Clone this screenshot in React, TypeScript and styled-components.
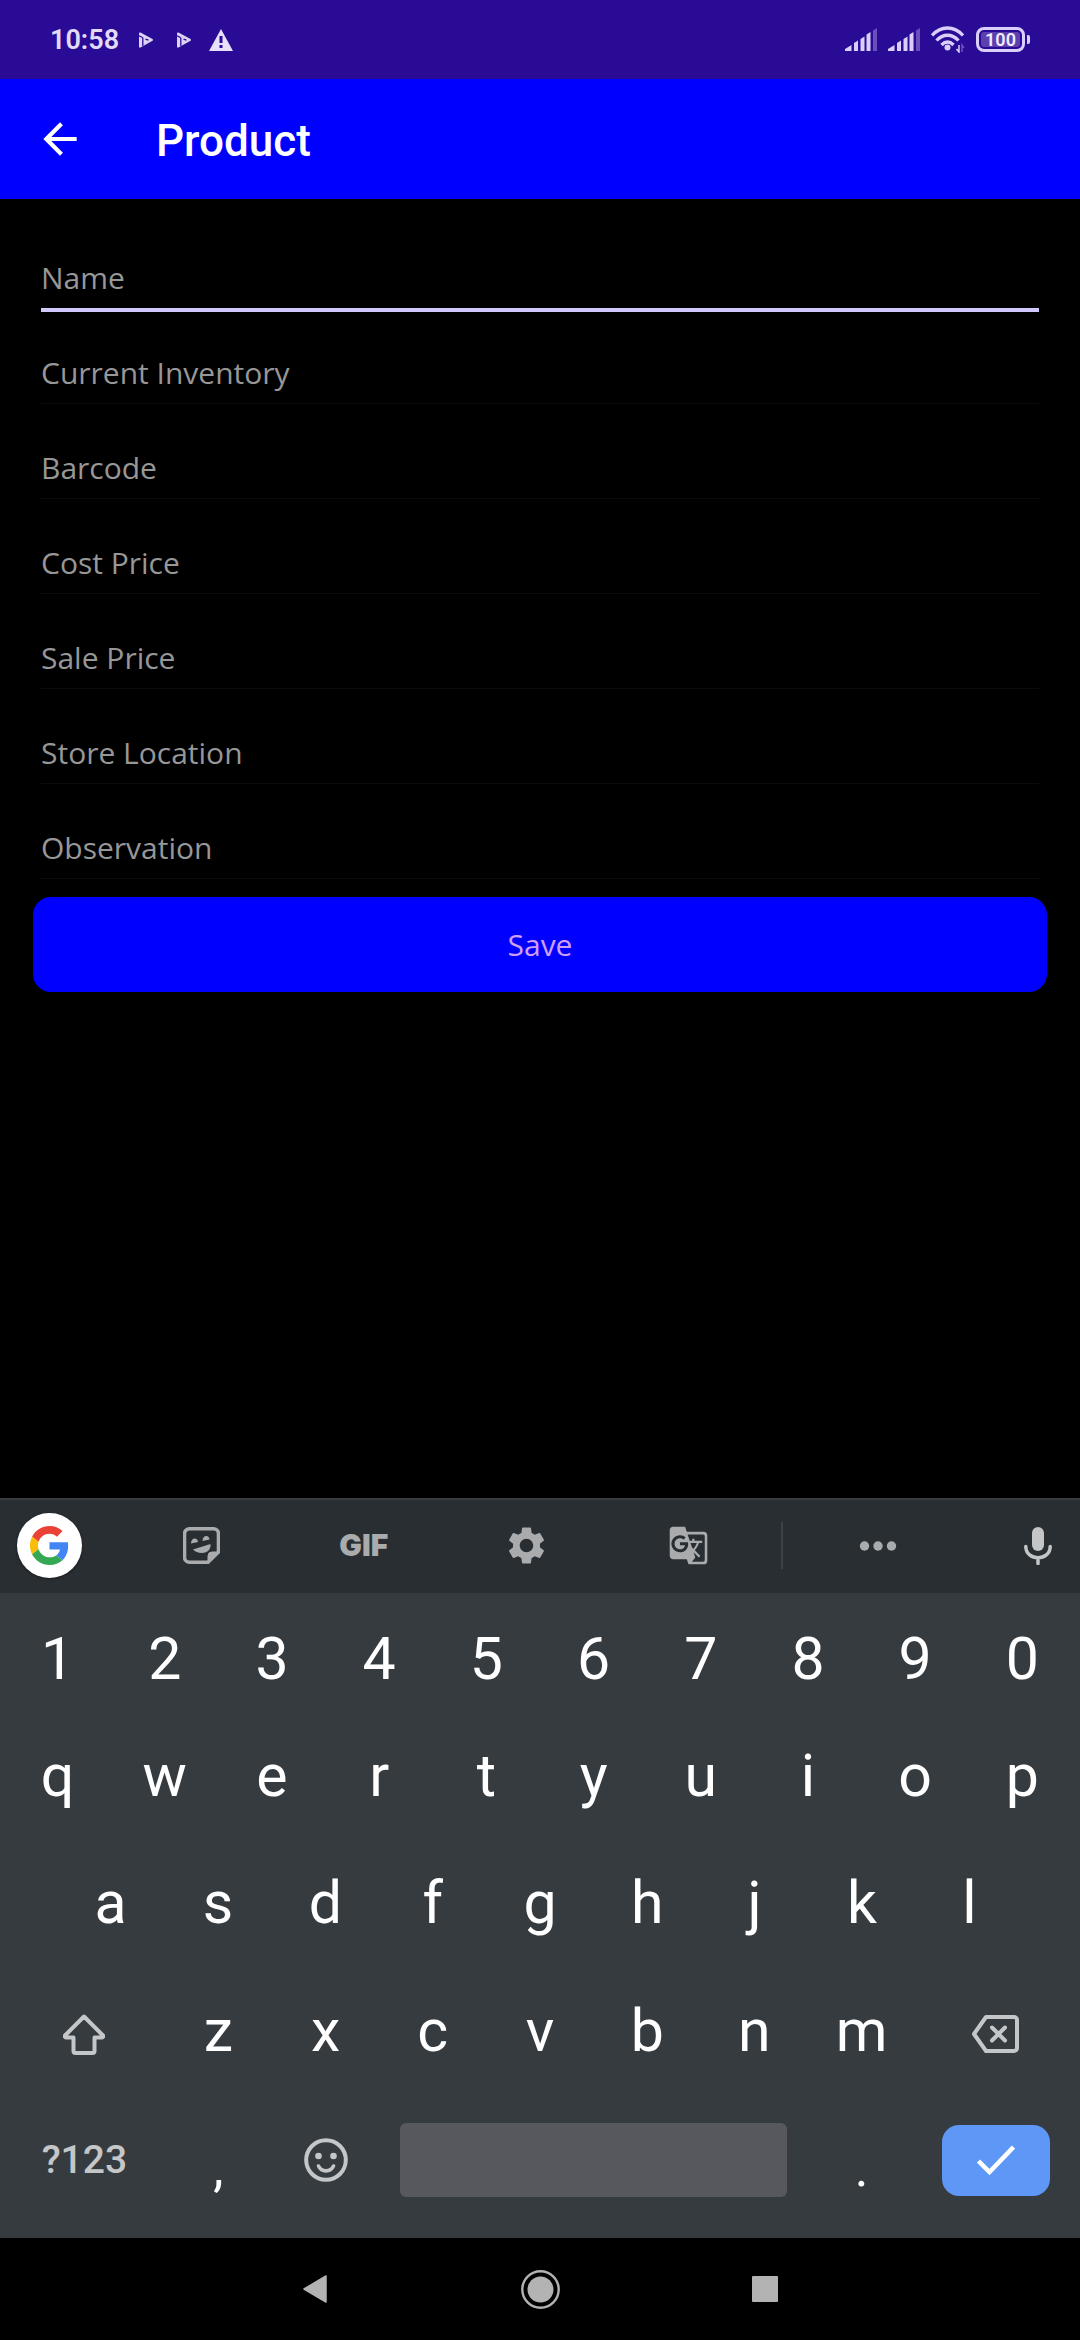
import React from 'react';
import styled, { createGlobalStyle } from 'styled-components';
import { MdArrowBack, MdSettings, MdGTranslate } from 'react-icons/md';

const GlobalStyle = createGlobalStyle`
  *, *::before, *::after { box-sizing: border-box; }
  body { margin: 0; background: #000; font-family: Roboto, sans-serif; }
  button, input { font: inherit; margin: 0; }
  button { padding: 0; border: 0; background: none; color: inherit; cursor: pointer; }
  svg { display: block; flex: none; }
`;

const Screen = styled.div`
  display: flex;
  flex-direction: column;
  min-height: 100vh;
  background: #000;
`;

const StatusBar = styled.div`
  display: flex;
  align-items: center;
  justify-content: space-between;
  height: 79px;
  padding: 0 50px;
  background: #2a0b96;
  color: #e2dbf8;
`;

const StatusGroup = styled.div<{ $gap: number }>`
  display: flex;
  align-items: center;
  gap: ${(p) => p.$gap}px;
`;

const Clock = styled.time`
  font-size: 27px;
  font-weight: 600;
  line-height: 32px;
`;

const Notices = styled.div`
  display: grid;
  grid-template-columns: 14px 14px 24px;
  column-gap: 24px;
  align-items: center;
  margin-left: 20px;

  svg:last-child { margin-left: -6px; }
`;

const AppBar = styled.header`
  display: flex;
  align-items: center;
  height: 120px;
  padding: 0 35px;
  background: #0000ff;
  color: #fff;
`;

const BackButton = styled.button`
  width: 50px;
  height: 50px;
`;

const Title = styled.h1`
  margin: 0;
  padding: 4px 0 0 71px;
  font-size: 44px;
  font-weight: 500;
  line-height: 52px;
`;

const Form = styled.form`
  display: flex;
  flex: 1;
  flex-direction: column;
  padding: 18px 33px;
  font-family: "Open Sans", sans-serif;
  font-size: 30px;
`;

const Field = styled.div`
  height: 95px;
  padding: 34px 8px 0;
`;

const TextInput = styled.input<{ $active: boolean }>`
  display: block;
  width: 100%;
  height: ${(p) => (p.$active ? 61 : 58)}px;
  padding: 0 0 4px;
  border: 0;
  border-bottom: ${(p) => (p.$active ? '4px solid #cfc9fb' : '1px solid #0b0b0b')};
  border-radius: 0;
  outline: 0;
  background: transparent;
  color: #fff;

  &::placeholder { color: #979797; opacity: 1; }
`;

const SaveButton = styled.button`
  height: 95px;
  margin-top: 15px;
  border-radius: 18px;
  background: #0000ff;
  color: #cf9ef5;
`;

const Keyboard = styled.section`
  background: #363b3f;
`;

const Toolbar = styled.div`
  display: grid;
  grid-template-columns: 120px repeat(4, 1fr) 24px 168px 118px;
  align-items: center;
  justify-items: center;
  height: 95px;
  padding-bottom: 2px;
  border-top: 2px solid #383c41;
  background: #292e32;
  color: #a9abad;
`;

const ToolButton = styled.button`
  display: grid;
  place-items: center;
  min-width: 60px;
  height: 60px;
`;

const GifButton = styled(ToolButton)`
  padding-bottom: 2px;
  font-family: Inter, sans-serif;
  font-size: 30px;
  font-weight: 900;
  line-height: 36px;
`;

const GoogleButton = styled.button`
  display: grid;
  place-items: center;
  justify-self: start;
  width: 65px;
  height: 65px;
  margin-left: 17px;
  border-radius: 50%;
  background: #fff;
  box-shadow: 0 1px 3px rgba(0, 0, 0, 0.4);
`;

const MicButton = styled(ToolButton)`
  justify-self: end;
  margin-right: 12px;
  color: #c3c5c7;
`;

const Divider = styled.div`
  width: 2px;
  height: 47px;
  background: #3e4247;
`;

const Keys = styled.div`
  padding: 12px 0 13px;
`;

const KeyRow = styled.div<{ $height: number; $columns: string; $inset?: number }>`
  display: grid;
  grid-template-columns: ${(p) => p.$columns};
  align-items: center;
  height: ${(p) => p.$height}px;
  padding: 0 ${(p) => p.$inset ?? 4}px;
`;

const Key = styled.button`
  height: 100%;
  color: #fff;
  font-size: 59px;
  line-height: 70px;
  text-align: center;
`;

const PunctuationKey = styled(Key)`
  padding-top: 18px;
  font-size: 52px;
`;

const ControlKey = styled.button`
  display: grid;
  place-items: center;
  height: 100%;
  color: #c4c6c8;
  font-size: 39px;
  font-weight: 500;
`;

const EditKey = styled(ControlKey)`
  padding-top: 6px;
`;

const SpaceKey = styled.button`
  height: 74px;
  margin: 0 21px;
  border-radius: 6px;
  background: #56585d;
`;

const EnterKey = styled.button`
  display: grid;
  place-items: center;
  justify-self: center;
  width: 108px;
  height: 71px;
  border-radius: 17px;
  background: #5e97f6;
`;

const NavBar = styled.nav`
  display: grid;
  grid-template-columns: 1fr 225px 225px 225px 1fr;
  align-items: center;
  justify-items: center;
  height: 102px;
  background: #000;

  button:first-child { grid-column: 2; }
`;

const NavButton = styled.button`
  display: grid;
  place-items: center;
  width: 80px;
  height: 80px;
`;

const PlayIcon = () => (
  <svg width="14" height="16" viewBox="0 0 14 16" fill="none">
    <path d="M0 1.500Q0 0 1.500.500L13.500 7Q14.500 8 13.500 8.800L6 13 1.500 15.500Q0 16 0 14.500Z" fill="#dcd3f5" />
    <path d="M0 3.800 3.500 5.500M3.800 5.500V14M6.500 7.200 9.500 8.200" stroke="#2a0b96" strokeWidth="1.300" />
  </svg>
);

const WarningIcon = () => (
  <svg width="24" height="22" viewBox="0 0 24 22">
    <path d="M12 0 24 22H0Z" fill="#e6e0fa" />
    <path d="M10.500 7h3v7h-3zM10.500 16h3v3h-3z" fill="#2a0b96" />
  </svg>
);

const SignalIcon = () => (
  <svg width="32" height="23" viewBox="0 0 32 23" fill="#dacffa">
    <path d="M0 23v-2l6.500-4v6zM9 23v-8l4-2.500V23zM15.500 23V11l4-2.500V23zM21.500 23V6.500l4-2.500v19z" />
    <path d="M28 23V2.500L32 0v23z" fill="#6a4fbb" />
  </svg>
);

const WifiIcon = () => (
  <svg width="34" height="27" viewBox="0 0 34 27" fill="none" stroke="#dacffa" strokeWidth="3.300">
    <path d="M1 9.500C10-.500 23-.500 32 9.500M5.500 14.500c6.500-7 15.500-7 22 0M10.500 19c4-4 8-4 12 0" />
    <circle cx="16.500" cy="21.500" r="3" fill="#dacffa" stroke="none" />
    <path d="M28 19v7l-2.500-3" stroke="#dacffa" strokeWidth="1.500" />
    <path d="M31 26v-7l2 3" stroke="#6a4fbb" strokeWidth="1.500" />
  </svg>
);

const BatteryShell = styled.div`
  display: flex;
  align-items: center;
  gap: 2px;

  &::after {
    width: 3px;
    height: 9px;
    border-radius: 0 2px 2px 0;
    background: #dacffa;
    content: "";
  }
`;

const BatteryLevel = styled.span`
  width: 49px;
  height: 25px;
  padding: 2px;
  border: 3px solid #dacffa;
  border-radius: 8px;
  background: #5c40b0 content-box;
  color: #f1ecff;
  font-size: 18px;
  font-weight: 600;
  line-height: 16px;
  text-align: center;
`;

const GoogleIcon = () => (
  <svg width="39" height="39" viewBox="0 0 48 48">
    <path fill="#EA4335" d="M24 9.500c3.540 0 6.710 1.220 9.210 3.600l6.850-6.850C35.900 2.380 30.470 0 24 0 14.620 0 6.510 5.380 2.560 13.220l7.980 6.190C12.430 13.720 17.740 9.500 24 9.500z" />
    <path fill="#4285F4" d="M46.980 24.550c0-1.570-.15-3.090-.38-4.550H24v9.020h12.940c-.58 2.960-2.260 5.480-4.780 7.180l7.730 6c4.510-4.180 7.090-10.360 7.090-17.650z" />
    <path fill="#FBBC05" d="M10.530 28.590c-.48-1.450-.76-2.990-.76-4.590s.27-3.140.76-4.590l-7.980-6.190C.92 16.460 0 20.120 0 24c0 3.880.92 7.540 2.560 10.780l7.970-6.190z" />
    <path fill="#34A853" d="M24 48c6.480 0 11.930-2.130 15.890-5.810l-7.730-6c-2.150 1.450-4.920 2.300-8.160 2.300-6.260 0-11.570-4.220-13.470-9.910l-7.980 6.190C6.510 42.620 14.620 48 24 48z" />
  </svg>
);

const StickerIcon = () => (
  <svg width="37" height="37" viewBox="0 0 37 37" fill="none" stroke="currentColor" strokeWidth="3.600" strokeLinejoin="round">
    <path d="M6.500 1.800h24a5 5 0 0 1 5 5V25L25 35.200H6.500a5 5 0 0 1-5-5V6.800a5 5 0 0 1 5-5Z" />
    <path d="M35.500 25H29a4 4 0 0 0-4 4v6.200Z" fill="currentColor" strokeWidth="1" />
    <path d="M10 22.500 27.500 17c.5 5.500-3 9-8.500 9-4 0-7-1.500-9-3.500Z" fill="currentColor" stroke="none" />
    <path d="M8 16.500c0-6.500 7-6 7-1.500ZM19.500 14c0-6.500 7-6 7-1.500Z" fill="currentColor" stroke="none" />
  </svg>
);

const MoreIcon = () => (
  <svg width="38" height="10" viewBox="0 0 38 10" fill="currentColor">
    <circle cx="5.500" cy="5" r="4.700" />
    <circle cx="19" cy="5" r="4.700" />
    <circle cx="32.500" cy="5" r="4.700" />
  </svg>
);

const MicIcon = () => (
  <svg width="28" height="38" viewBox="0 0 28 38" fill="none" stroke="currentColor" strokeWidth="3.500" strokeLinecap="round">
    <rect x="8" y="0" width="12" height="24" rx="6" fill="currentColor" stroke="none" />
    <path d="M1.800 19.500c0 15 24.400 15 24.400 0M14 31.500v5" />
  </svg>
);

const ShiftIcon = () => (
  <svg width="42" height="41" viewBox="0 0 42 41" fill="none" stroke="currentColor" strokeWidth="4" strokeLinejoin="round">
    <path d="M21 2.500 2 21.500c-.5 1 0 2 1 2h7.500V37q0 2 2 2h17q2 0 2-2V23.500H39c1 0 1.500-1 1-2Z" />
  </svg>
);

const BackspaceIcon = () => (
  <svg width="47" height="38" viewBox="0 0 47 38" fill="none" stroke="currentColor" strokeWidth="4" strokeLinejoin="round" strokeLinecap="round">
    <path d="M14 2h28a3 3 0 0 1 3 3v28a3 3 0 0 1-3 3H14L2 19Z" />
    <path d="m20 12.500 13 13m0-13-13 13" />
  </svg>
);

const EmojiIcon = () => (
  <svg width="44" height="44" viewBox="0 0 44 44" fill="none" stroke="currentColor" strokeWidth="4" strokeLinecap="round">
    <circle cx="22" cy="22" r="19.800" />
    <path d="M14.500 28c3 6.500 12 6.500 15 0" strokeWidth="3.600" />
    <circle cx="14.500" cy="18" r="3.300" fill="currentColor" stroke="none" />
    <circle cx="29.500" cy="18" r="3.300" fill="currentColor" stroke="none" />
  </svg>
);

const CheckIcon = () => (
  <svg width="38" height="30" viewBox="0 0 38 30" fill="none" stroke="#fff" strokeWidth="4.500">
    <path d="m1.500 16 11 11L36.500 2" />
  </svg>
);

const NavBackIcon = () => (
  <svg width="24" height="28" viewBox="0 0 24 28" fill="#b3b3b3" stroke="#b3b3b3" strokeWidth="1.500" strokeLinejoin="round">
    <path d="M23 1v26L1 14Z" />
  </svg>
);

const NavHomeIcon = () => (
  <svg width="39" height="39" viewBox="0 0 39 39" fill="#b3b3b3">
    <circle cx="19.500" cy="19.500" r="18.200" fill="none" stroke="#b3b3b3" strokeWidth="2.400" />
    <circle cx="19.500" cy="19.500" r="13" />
  </svg>
);

const NavRecentIcon = () => (
  <svg width="26" height="26" viewBox="0 0 26 26" fill="#b3b3b3">
    <rect width="26" height="26" rx="1" />
  </svg>
);

const fields = ['Name', 'Current Inventory', 'Barcode', 'Cost Price', 'Sale Price', 'Store Location', 'Observation'];

const letters = (text: string) => text.split('').map((char) => <Key key={char} type="button">{char}</Key>);

export default function App() {
  return (
    <Screen>
      <GlobalStyle />
      <StatusBar>
        <StatusGroup $gap={0}>
          <Clock>10:58</Clock>
          <Notices>
            <PlayIcon />
            <PlayIcon />
            <WarningIcon />
          </Notices>
        </StatusGroup>
        <StatusGroup $gap={11}>
          <SignalIcon />
          <SignalIcon />
          <WifiIcon />
          <BatteryShell>
            <BatteryLevel>100</BatteryLevel>
          </BatteryShell>
        </StatusGroup>
      </StatusBar>

      <AppBar>
        <BackButton type="button" aria-label="Back">
          <MdArrowBack size={50} />
        </BackButton>
        <Title>Product</Title>
      </AppBar>

      <Form onSubmit={(event) => event.preventDefault()}>
        {fields.map((name, index) => (
          <Field key={name}>
            <TextInput type="text" placeholder={name} aria-label={name} $active={index === 0} />
          </Field>
        ))}
        <SaveButton type="submit">Save</SaveButton>
      </Form>

      <Keyboard aria-label="Keyboard">
        <Toolbar>
          <GoogleButton type="button" aria-label="Search"><GoogleIcon /></GoogleButton>
          <ToolButton type="button" aria-label="Stickers"><StickerIcon /></ToolButton>
          <GifButton type="button">GIF</GifButton>
          <ToolButton type="button" aria-label="Settings"><MdSettings size={45} /></ToolButton>
          <ToolButton type="button" aria-label="Translate"><MdGTranslate size={41} /></ToolButton>
          <Divider />
          <ToolButton type="button" aria-label="More"><MoreIcon /></ToolButton>
          <MicButton type="button" aria-label="Voice input"><MicIcon /></MicButton>
        </Toolbar>
        <Keys>
          <KeyRow $height={108} $columns="repeat(10, 1fr)">{letters('1234567890')}</KeyRow>
          <KeyRow $height={126} $columns="repeat(10, 1fr)">{letters('qwertyuiop')}</KeyRow>
          <KeyRow $height={128} $columns="repeat(9, 1fr)" $inset={57}>{letters('asdfghjkl')}</KeyRow>
          <KeyRow $height={128} $columns="3fr repeat(7, 2fr) 3fr">
            <EditKey type="button" aria-label="Shift"><ShiftIcon /></EditKey>
            {letters('zxcvbnm')}
            <EditKey type="button" aria-label="Backspace"><BackspaceIcon /></EditKey>
          </KeyRow>
          <KeyRow $height={130} $columns="3fr 2fr 2fr 8fr 2fr 3fr">
            <ControlKey type="button">?123</ControlKey>
            <PunctuationKey type="button">,</PunctuationKey>
            <ControlKey type="button" aria-label="Emoji"><EmojiIcon /></ControlKey>
            <SpaceKey type="button" aria-label="Space" />
            <PunctuationKey type="button">.</PunctuationKey>
            <EnterKey type="button" aria-label="Done"><CheckIcon /></EnterKey>
          </KeyRow>
        </Keys>
      </Keyboard>

      <NavBar aria-label="System navigation">
        <NavButton type="button" aria-label="Back"><NavBackIcon /></NavButton>
        <NavButton type="button" aria-label="Home"><NavHomeIcon /></NavButton>
        <NavButton type="button" aria-label="Recent apps"><NavRecentIcon /></NavButton>
      </NavBar>
    </Screen>
  );
}
